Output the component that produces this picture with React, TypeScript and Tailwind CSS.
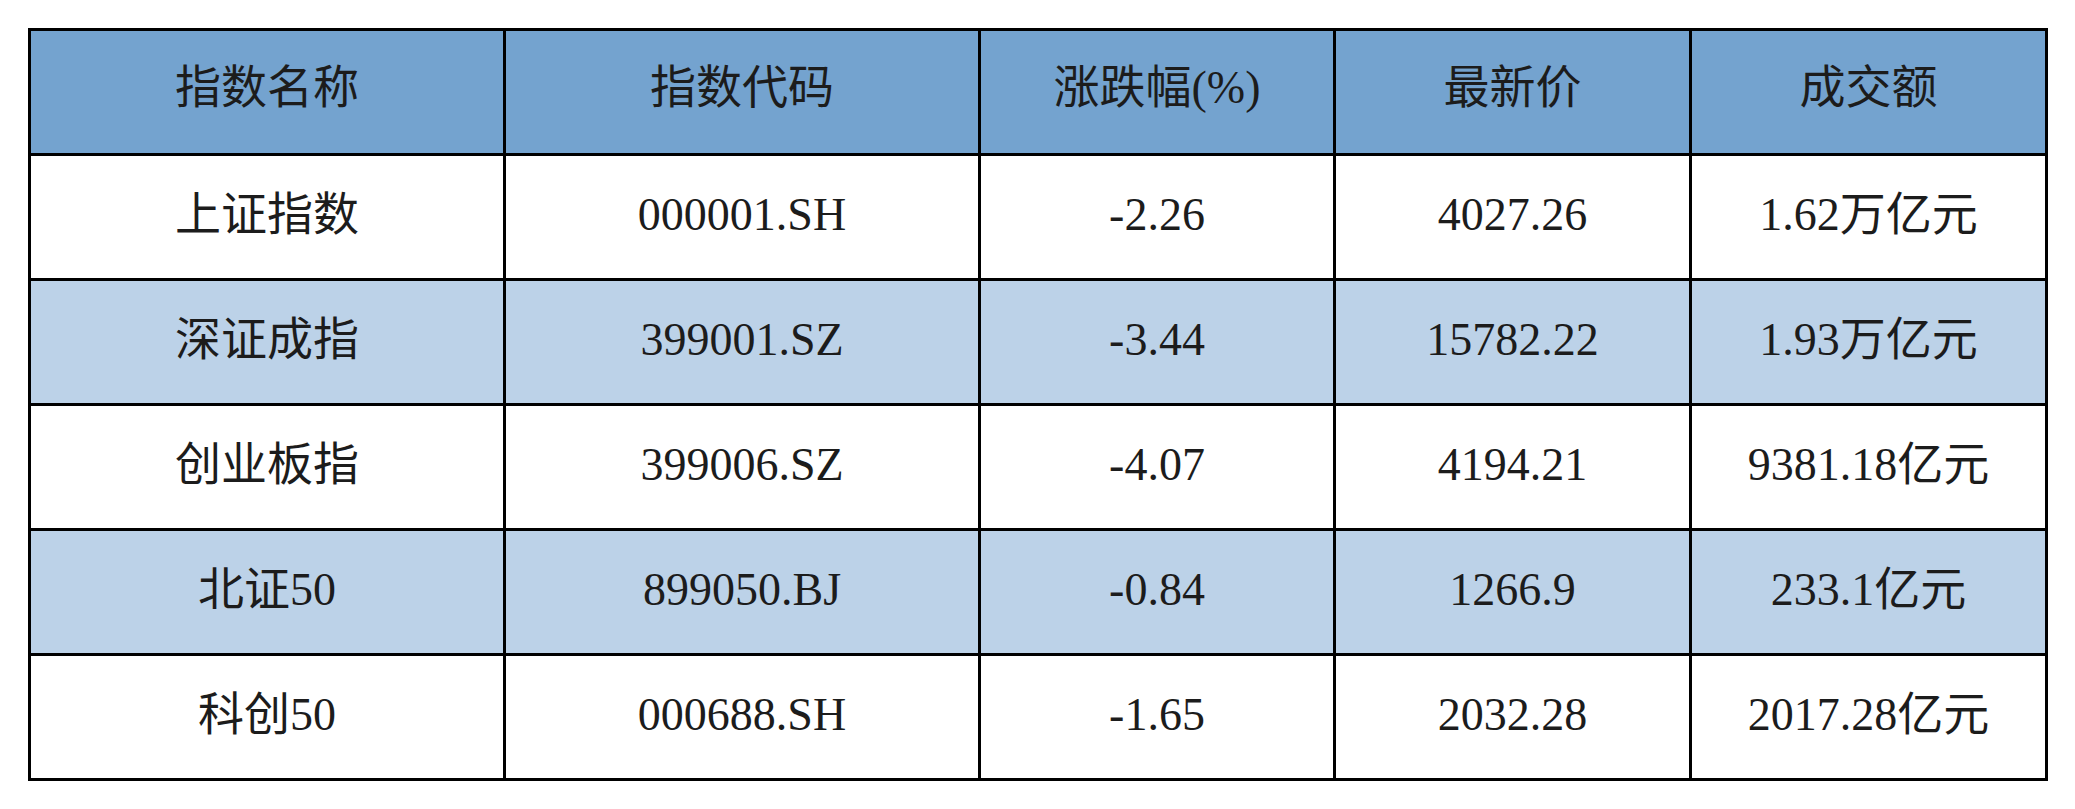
const header = ["指数名称", "指数代码", "涨跌幅(%)", "最新价", "成交额"];

const rows = [
  ["上证指数", "000001.SH", "-2.26", "4027.26", "1.62万亿元"],
  ["深证成指", "399001.SZ", "-3.44", "15782.22", "1.93万亿元"],
  ["创业板指", "399006.SZ", "-4.07", "4194.21", "9381.18亿元"],
  ["北证50", "899050.BJ", "-0.84", "1266.9", "233.1亿元"],
  ["科创50", "000688.SH", "-1.65", "2032.28", "2017.28亿元"],
];

export default function App() {
  return (
    <div className="min-h-[809px] w-[2075px] bg-white pl-[28px] pt-[28px]">
      <div
        className="grid w-fit grid-cols-[472px_472px_352px_353px_353px] gap-[3px] bg-black p-[3px] text-[46px] leading-none text-[#1c1c1c]"
        style={{ fontFamily: '"Liberation Serif", "Noto Sans CJK SC", serif' }}
      >
        {header.map((h) => (
          <div key={h} className="flex h-[122px] items-center justify-center bg-[#74a3cf] pb-2">
            {h}
          </div>
        ))}
        {rows.map((r, i) =>
          r.map((c, j) => (
            <div
              key={`${i}-${j}`}
              className={`flex h-[122px] items-center justify-center pb-1 ${i % 2 === 1 ? "bg-[#bcd2e8]" : "bg-white"}`}
            >
              {c}
            </div>
          ))
        )}
      </div>
    </div>
  );
}
